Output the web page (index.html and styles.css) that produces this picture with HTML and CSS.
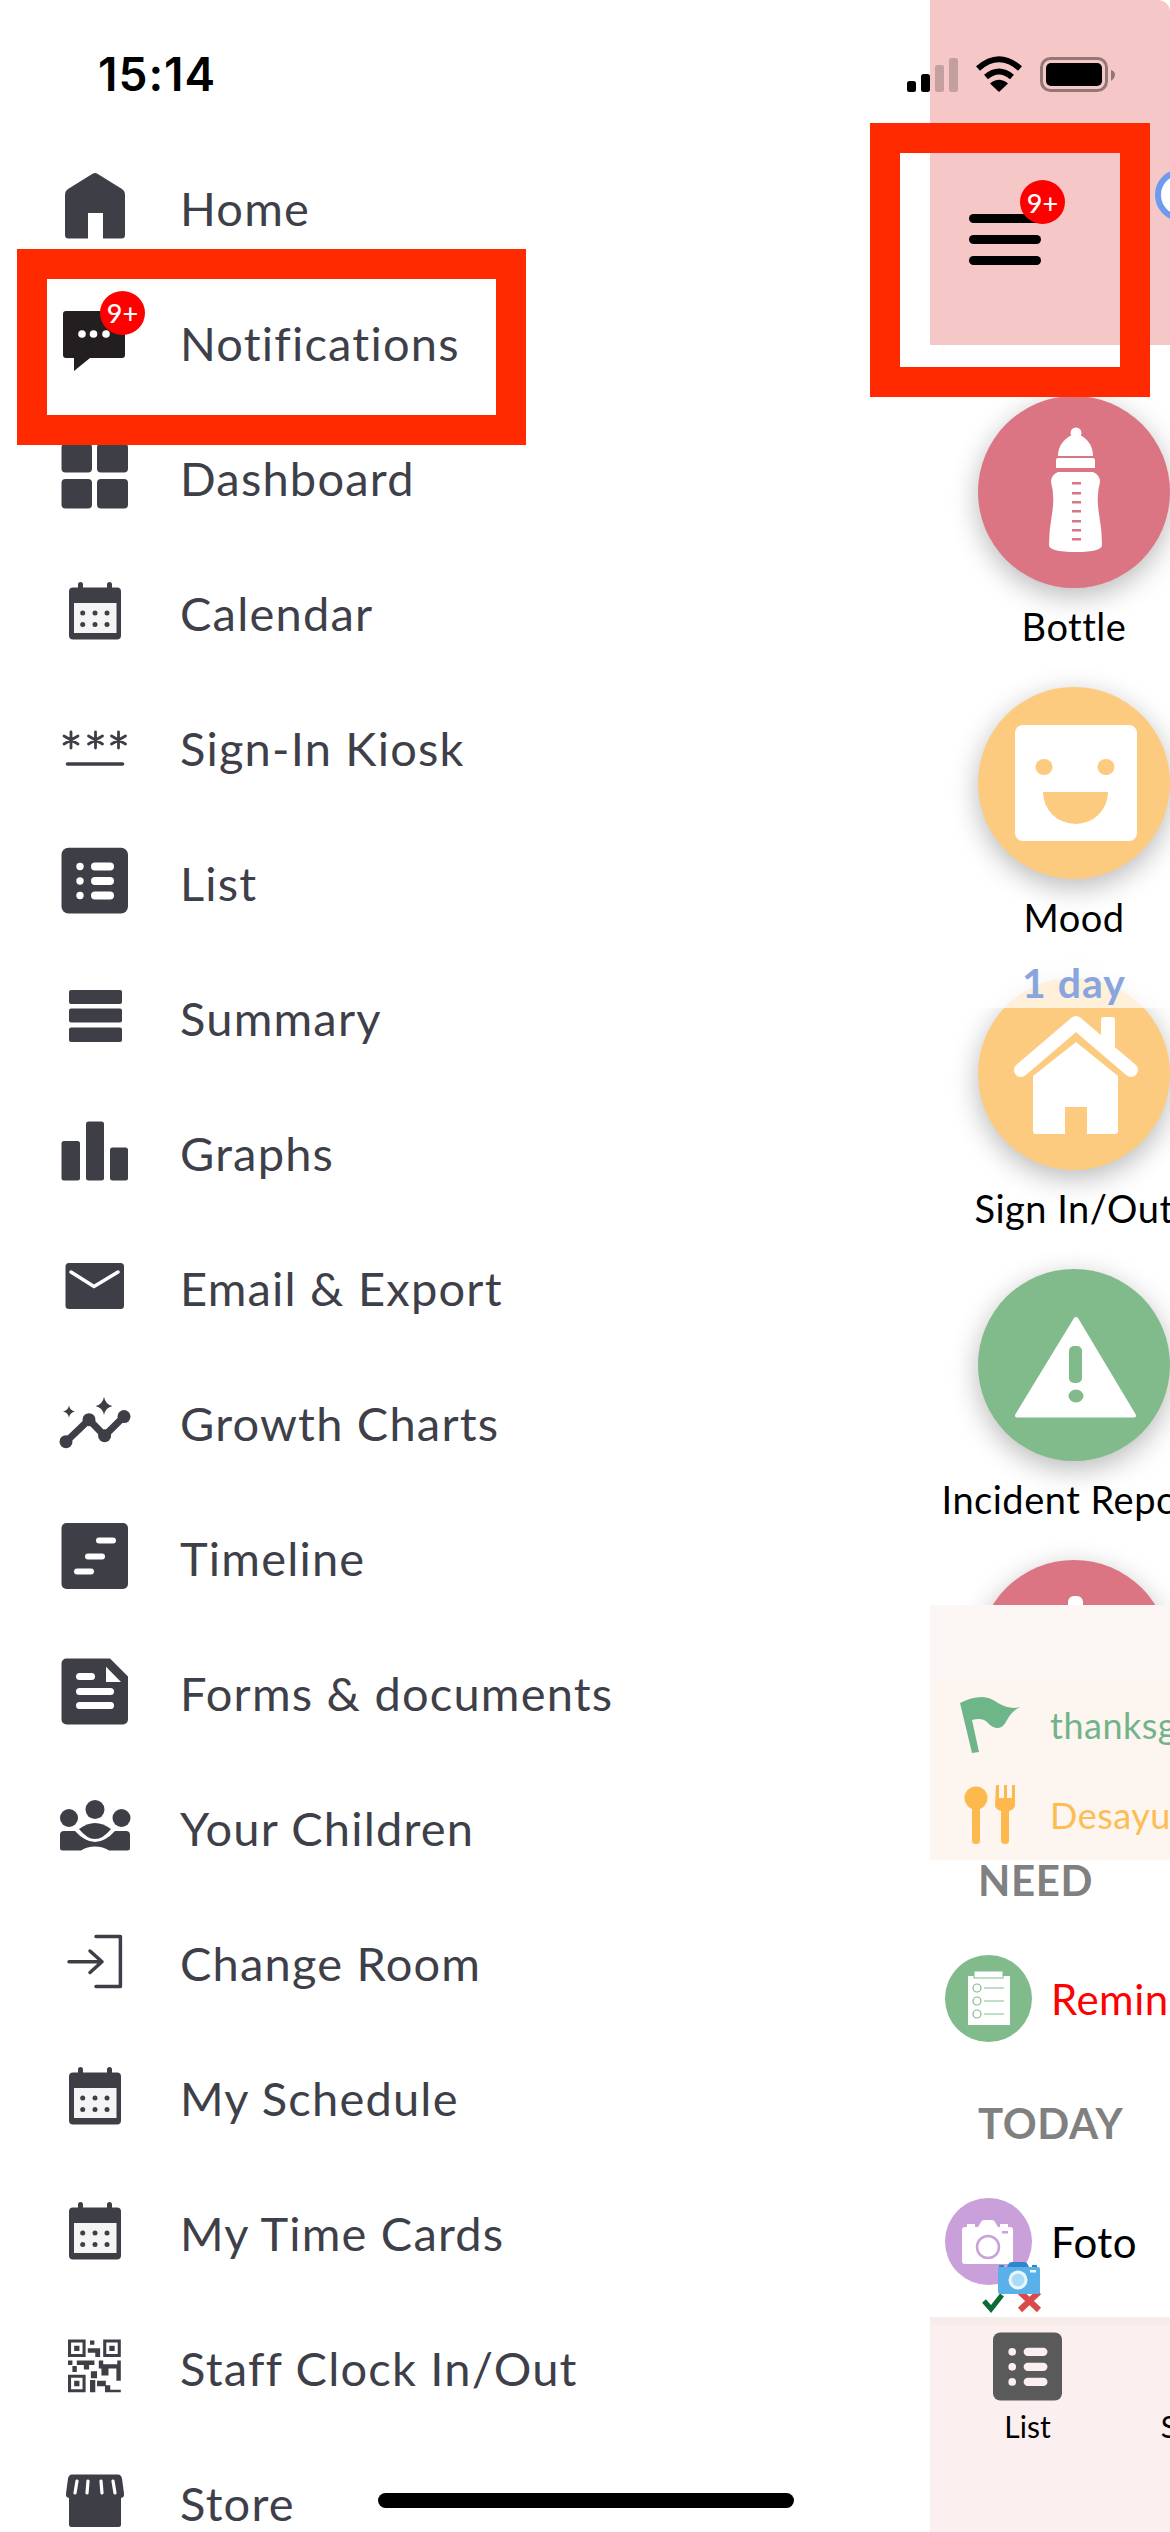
FILE: index.html

```html
<!DOCTYPE html>
<html lang="en">
<head>
  <meta charset="UTF-8" />
  <meta name="viewport" content="width=device-width, initial-scale=1.0" />
  <title>Menu</title>
  <link rel="stylesheet" href="styles.css">
</head>
<body>
  <svg class="defs" aria-hidden="true">
    <symbol id="calendar-icon" viewBox="0 0 80 80">
      <path d="M18 14.5h5v-3a2.5 2.5 0 0 1 5 0v3h24v-3a2.5 2.5 0 0 1 5 0v3h5a4 4 0 0 1 4 4v44a4 4 0 0 1-4 4H18a4 4 0 0 1-4-4v-44a4 4 0 0 1 4-4z" />
      <rect class="cut" x="19" y="30" width="42.500" height="30" />
      <g class="dots">
        <circle cx="27.700" cy="40" r="2.500" /><circle cx="40" cy="40" r="2.500" /><circle cx="52" cy="40" r="2.500" />
        <circle cx="27.700" cy="51.500" r="2.500" /><circle cx="40" cy="51.500" r="2.500" /><circle cx="52" cy="51.500" r="2.500" />
      </g>
    </symbol>
  </svg>

  <div class="screen">
    <nav class="drawer">
      <ul class="menu">
        <li class="menu-item">
          <svg class="menu-icon" viewBox="0 0 80 80"><path d="M38 5.500a4 4 0 0 1 4 0L67 21q3 2 3 6v40q0 3.500-3.500 3.500H48V45H33v25.500H13.500Q10 70.500 10 67V27q0-4 3-6z" /></svg>
          <span>Home</span>
        </li>
        <li class="menu-item">
          <div class="icon-wrap">
            <svg class="menu-icon chat" viewBox="0 0 80 80">
              <path d="M11 8h56a3 3 0 0 1 3 3v41a3 3 0 0 1-3 3H35L19 68V55h-8a3 3 0 0 1-3-3V11a3 3 0 0 1 3-3z" />
              <circle class="cut" cx="27" cy="31" r="3.800" /><circle class="cut" cx="38.500" cy="31" r="3.800" /><circle class="cut" cx="51" cy="31" r="3.800" />
            </svg>
            <b class="badge menu-badge">9+</b>
          </div>
          <span>Notifications</span>
        </li>
        <li class="menu-item">
          <svg class="menu-icon" viewBox="0 0 80 80">
            <rect x="6.500" y="5.500" width="30.500" height="29" rx="4" /><rect x="42" y="5.500" width="31" height="29" rx="4" />
            <rect x="6.500" y="41" width="30.500" height="29.500" rx="4" /><rect x="42" y="41" width="31" height="29.500" rx="4" />
          </svg>
          <span>Dashboard</span>
        </li>
        <li class="menu-item">
          <svg class="menu-icon"><use href="#calendar-icon" /></svg>
          <span>Calendar</span>
        </li>
        <li class="menu-item">
          <svg class="menu-icon" viewBox="0 0 80 80">
            <path class="line" d="M16 24v16M9 28l14 8M23 28L9 36M40.500 24v16M33.500 28l14 8M47.500 28l-14 8M63.500 24v16M56.500 28l14 8M70.500 28l-14 8" stroke-width="2.800" />
            <path class="line" d="M12.500 56h55" stroke-width="3.600" />
          </svg>
          <span>Sign-In Kiosk</span>
        </li>
        <li class="menu-item">
          <svg class="menu-icon" viewBox="0 0 80 80">
            <rect x="6.500" y="4.800" width="66.500" height="65.700" rx="7" />
            <g class="cut">
              <circle cx="25" cy="23.500" r="3.700" /><circle cx="25" cy="38" r="3.700" /><circle cx="25" cy="52.500" r="3.700" />
              <rect x="36" y="19.500" width="23" height="8" rx="4" /><rect x="36" y="34" width="23" height="8" rx="4" /><rect x="36" y="48.500" width="23" height="8" rx="4" />
            </g>
          </svg>
          <span>List</span>
        </li>
        <li class="menu-item">
          <svg class="menu-icon" viewBox="0 0 80 80">
            <rect x="14" y="12" width="53" height="14" rx="2" /><rect x="14" y="30.500" width="53" height="14" rx="2" /><rect x="14" y="49.500" width="53" height="14.500" rx="2" />
          </svg>
          <span>Summary</span>
        </li>
        <li class="menu-item">
          <svg class="menu-icon" viewBox="0 0 80 80">
            <rect x="6.500" y="28" width="18.500" height="39.500" rx="2.500" /><rect x="31" y="8.500" width="18" height="59" rx="2.500" /><rect x="55" y="34.500" width="18" height="33" rx="2.500" />
          </svg>
          <span>Graphs</span>
        </li>
        <li class="menu-item">
          <svg class="menu-icon" viewBox="0 0 80 80">
            <rect x="10.500" y="15" width="58.500" height="46" rx="3.500" />
            <path class="cut-line" d="M16 24l23 14.500L63 24" stroke-width="3.400" />
          </svg>
          <span>Email &amp; Export</span>
        </li>
        <li class="menu-item">
          <svg class="menu-icon" viewBox="0 0 80 80">
            <path class="line" d="M11 58.700L34 36.700 49.600 52.700 69 33.600" stroke-width="7" />
            <circle cx="11" cy="58.700" r="6.500" /><circle cx="34" cy="36.700" r="6.500" /><circle cx="49.600" cy="52.700" r="6.500" /><circle cx="69" cy="33.600" r="6.500" />
            <path d="M49 14q1.500 7.500 8.500 9-7 1.500-8.500 9-1.500-7.500-8.500-9 7-1.500 8.500-9zM14 22.500q1 5 6 6-5 1-6 6-1-5-6-6 5-1 6-6z" />
          </svg>
          <span>Growth Charts</span>
        </li>
        <li class="menu-item">
          <svg class="menu-icon" viewBox="0 0 80 80">
            <rect x="6.500" y="5" width="66.500" height="66" rx="5" />
            <g class="cut">
              <rect x="41" y="19.500" width="20" height="6" rx="3" /><rect x="30" y="35.500" width="20" height="6" rx="3" /><rect x="19" y="50.500" width="20" height="6" rx="3" />
            </g>
          </svg>
          <span>Timeline</span>
        </li>
        <li class="menu-item">
          <svg class="menu-icon" viewBox="0 0 80 80">
            <path d="M11.500 5.500H55l18 18v43a5 5 0 0 1-5 5H11.500a5 5 0 0 1-5-5v-56a5 5 0 0 1 5-5z" />
            <path class="cut" d="M51 13.800L66 29H51z" />
            <g class="cut">
              <rect x="21" y="20" width="19" height="7" rx="3.500" /><rect x="21" y="35" width="38" height="7" rx="3.500" /><rect x="21" y="49" width="38" height="7" rx="3.500" />
            </g>
          </svg>
          <span>Forms &amp; documents</span>
        </li>
        <li class="menu-item">
          <svg class="menu-icon" viewBox="0 0 80 80">
            <circle cx="40" cy="21.500" r="9.500" /><circle cx="14" cy="30" r="9" /><circle cx="66.500" cy="30" r="9" />
            <path d="M24 41q8-6 16-6t16 6q-8 10-16 10t-16-10z" />
            <path d="M5 47q0-4 4-4h11q10 11 20 11t20-11h11q4 0 4 4v13q0 2.500-2.500 2.500H54q-6-4-14-4t-14 4H7.500Q5 62.500 5 60z" />
          </svg>
          <span>Your Children</span>
        </li>
        <li class="menu-item">
          <svg class="menu-icon" viewBox="0 0 80 80">
            <path class="line" d="M41 13.500h24.400v50H41M14 38.800h33M35 28l12 10.800L35 49.500" stroke-width="3.500" />
          </svg>
          <span>Change Room</span>
        </li>
        <li class="menu-item">
          <svg class="menu-icon"><use href="#calendar-icon" /></svg>
          <span>My Schedule</span>
        </li>
        <li class="menu-item">
          <svg class="menu-icon"><use href="#calendar-icon" /></svg>
          <span>My Time Cards</span>
        </li>
        <li class="menu-item">
          <svg class="menu-icon" viewBox="0 0 80 80">
            <g transform="translate(13 11.500) scale(4.400)">
              <path fill-rule="evenodd" d="M0 0h4v4H0zM.7.7v2.600h2.600V.7zM8 0h4v4H8zM8.700.7v2.600h2.600V.7zM0 8h4v4H0zM.7 8.700v2.600h2.600V8.700z" />
              <path d="M1.400 1.400h1.200v1.200H1.400zM9.400 1.400h1.200v1.200H9.400zM1.400 9.400h1.200v1.200H1.400z" />
              <path d="M5 .2h1v1H5zM4.500 2h2.800v2H6.200V3H4.500zM0 4.800h1v1H0zM2 4.800h4v1H4.800v1H3.600v-1H2zM7 4.800h1v.8h3.200v-.8h.8v4.600h-1V6.600H9.200v1.600H7.600V6.600H7zM1 6h1v1.400H1zM5.200 7.200h1.400v1.600H5.200zM5 9.200h1.200v2.800H5zM6.600 9.400h2v1h1v1h2.400v.6H8.400v-1.400H6.600z" />
            </g>
          </svg>
          <span>Staff Clock In/Out</span>
        </li>
        <li class="menu-item">
          <svg class="menu-icon" viewBox="0 0 80 80">
            <path d="M17 11.500h46q3 0 4 4l2 15q.5 4-3 4.500v27q0 2-2.500 2h-47q-2.500 0-2.500-2V35q-3.500-.5-3-4.500l2-15q1-4 4-4z" />
            <path class="cut-line" d="M22 18l-2 12M33 18l-1 12M46 18l1 12M58 18l2 12" stroke-width="3.200" />
          </svg>
          <span>Store</span>
        </li>
      </ul>
    </nav>

    <main class="panel">
      <header class="panel-head">
        <div class="burger">
          <i></i><i></i><i></i>
          <b class="badge burger-badge">9+</b>
        </div>
        <div class="search-ring"></div>
      </header>

      <section class="actions">
        <div class="action">
          <div class="circle rose">
            <svg viewBox="0 0 192 192">
              <circle cx="98" cy="37" r="5.500" />
              <path d="M80 60q0-14 14-21h8q13 7 13 21zM80 62h35a2 2 0 0 1 2 2v8H78v-8a2 2 0 0 1 2-2z" />
              <path d="M80 76h35q7 3 7 10-4 14-1 32 3 16 3 31 0 7-26 7-27 0-27-7 0-15 3-31 3-18-1-32 0-7 7-10z" />
              <g class="rose-fill">
                <rect x="94" y="86" width="9" height="2.500" /><rect x="94" y="96" width="9" height="2.500" /><rect x="94" y="105" width="9" height="2.500" /><rect x="94" y="114" width="9" height="2.500" />
                <rect x="94" y="124" width="9" height="2.500" /><rect x="94" y="133" width="9" height="2.500" /><rect x="94" y="142" width="9" height="2.500" />
              </g>
            </svg>
          </div>
          <p>Bottle</p>
        </div>
        <div class="action">
          <div class="circle amber">
            <svg viewBox="0 0 192 192">
              <rect x="37" y="38" width="122" height="116" rx="8" />
              <g class="amber-fill">
                <ellipse cx="66" cy="80" rx="8.500" ry="8" /><ellipse cx="128" cy="80" rx="8.500" ry="8" />
                <path d="M65 105h65a32.500 32 0 0 1-65 0z" />
              </g>
            </svg>
          </div>
          <p>Mood</p>
        </div>
        <div class="action">
          <div class="circle amber">
            <svg viewBox="0 0 192 192">
              <path d="M123 42a3 3 0 0 1 3-3h8a3 3 0 0 1 3 3v34l-14-11z" />
              <path class="roof" d="M43 92l55-47 55 47" />
              <path d="M98 64l42 34v55q0 3-3 3h-28v-27H87v27H58q-3 0-3-3V98z" />
            </svg>
          </div>
          <p>Sign In/Out</p>
        </div>
        <div class="action">
          <div class="circle sage">
            <svg viewBox="0 0 192 192">
              <path d="M96 49a2.500 2.500 0 0 1 4 0l58 97q.5 2.500-2 2.500H39q-2.500 0-2-2.500z" />
              <g class="sage-fill">
                <rect x="91" y="77" width="13" height="37" rx="5" /><ellipse cx="98" cy="127" rx="7.500" ry="6.500" />
              </g>
            </svg>
          </div>
          <p>Incident Report</p>
        </div>
        <div class="action">
          <div class="circle rose">
            <svg viewBox="0 0 192 192"><rect x="90" y="36" width="15" height="40" rx="6" /></svg>
          </div>
        </div>
        <div class="day-chip">1 day</div>
      </section>

      <section class="events">
        <div class="event event-green">
          <svg viewBox="0 0 60 56"><path d="M0 6Q11 0 22 0q8 0 16 6 12 7 22 4-8 4-13 13-4 8-9 8-6 0-11-6-5-5-15-2l7 32-7 1z" /></svg>
          <span>thanksgiving</span>
        </div>
        <div class="event event-amber">
          <svg viewBox="0 0 60 60"><circle cx="16" cy="13" r="11.500" /><path d="M12 20h8v36q0 3-4 3t-4-3zM36 0h3v13h5V0h3v13h5V0h3v20q0 4-6 6v30q0 3-4 3t-4-3V26q-6-2-6-6z" /></svg>
          <span>Desayuno</span>
        </div>
      </section>

      <section class="today">
        <h2>NEED</h2>
        <div class="entry entry-first">
          <div class="entry-icon sage">
            <svg viewBox="0 0 87 87">
              <rect x="23" y="21" width="42" height="49" />
              <rect class="clip" x="29" y="16" width="29" height="7" />
              <g class="check-rows">
                <circle cx="32" cy="33" r="4" /><circle cx="32" cy="46" r="4" /><circle cx="32" cy="59" r="4" />
                <path d="M39 33h20M39 46h20M39 59h20" />
              </g>
            </svg>
          </div>
          <span class="alert">Reminder</span>
        </div>
        <h2 class="heading-today">TODAY</h2>
        <div class="entry entry-first">
          <div class="entry-icon lilac">
            <svg viewBox="0 0 87 87">
              <path d="M22 26h8v3h3l3-5q1-2 3-2h8q2 0 3 2l3 5h2v-3h8v3h2q3 0 3 3v31q0 3-3 3H20q-3 0-3-3V32q0-3 3-3h2z" />
              <circle class="lens" cx="43" cy="49" r="11" />
              <rect class="lilac-fill" x="57" y="33" width="6" height="2.500" />
            </svg>
            <svg class="photo-mark" viewBox="0 0 60 51">
              <path class="mark-no" d="M38 30l19 18M57 30L38 48" />
              <path class="mark-yes" d="M2 39l7 8L20 33" />
              <path fill="#2f86cf" d="M26 3q1-3 4-3h12q3 0 4 3l1 2H25zM17 3h5v3h-5zM50 3h5v3h-5z" />
              <rect fill="#5ab0e8" x="16" y="5" width="42" height="27" rx="2" />
              <circle fill="#eaf7fe" cx="36" cy="18" r="9.500" /><circle fill="#a9dcf8" cx="36" cy="18" r="6.500" />
              <rect fill="#eaf7fe" x="48" y="8" width="6" height="2.500" />
            </svg>
          </div>
          <span>Foto</span>
        </div>
      </section>

      <footer class="tabbar">
        <div class="tab">
          <svg class="tab-icon" viewBox="6.500 4.800 66.500 65.700">
            <rect x="6.500" y="4.800" width="66.500" height="65.700" rx="7" />
            <g class="cut">
              <circle cx="25" cy="23.500" r="3.700" /><circle cx="25" cy="38" r="3.700" /><circle cx="25" cy="52.500" r="3.700" />
              <rect x="36" y="19.500" width="23" height="8" rx="4" /><rect x="36" y="34" width="23" height="8" rx="4" /><rect x="36" y="48.500" width="23" height="8" rx="4" />
            </g>
          </svg>
          <span>List</span>
        </div>
        <div class="tab">
          <div class="tab-icon-space"></div>
          <span>Summary</span>
        </div>
      </footer>
    </main>

    <!-- status bar and annotation boxes sit over everything -->
    <div class="statusbar">
      <span class="clock">15:14</span>
      <div class="status-icons">
        <svg class="signal" viewBox="0 0 51 34">
          <rect y="23" width="9" height="11" rx="2.500" /><rect x="14" y="16" width="9" height="18" rx="2.500" />
          <rect class="dim" x="28" y="7" width="9" height="27" rx="2.500" /><rect class="dim" x="42" width="9" height="34" rx="2.500" />
        </svg>
        <svg class="wifi" viewBox="0 0 48 36">
          <path d="M3 12.500Q24-6 45 12.500M11 21Q24 10 37 21" />
          <path class="wedge" d="M24 36l-9-8.500Q24 20 33 27.500z" />
        </svg>
        <svg class="battery" viewBox="0 0 75 35">
          <rect class="battery-frame" x="1.500" y="1.500" width="65" height="32" rx="9" />
          <rect x="6" y="6" width="56" height="23" rx="5" />
          <path class="battery-cap" d="M71 13q4 1 4 4.500T71 24z" />
        </svg>
      </div>
    </div>
    <div class="callout callout-menu"></div>
    <div class="callout callout-burger"></div>
    <div class="home-indicator"></div>
  </div>
</body>
</html>
```

FILE: styles.css

```css
* {
  box-sizing: border-box;
}
body {
  margin: 0;
  background: #fff;
  font-family: Lato, "Open Sans", sans-serif;
}
.defs {
  position: absolute;
  width: 0;
  height: 0;
}
.screen {
  position: relative;
  display: flex;
  width: 1170px;
  height: 2532px;
  overflow: hidden;
  background: #fff;
}

/* drawer */
.drawer {
  flex: none;
  width: 930px;
  padding: 140px 0 0 55px;
}
.menu {
  margin: 0;
  padding: 0;
  list-style: none;
}
.menu-item {
  display: flex;
  align-items: center;
  gap: 45px;
  height: 135px;
  color: #3e3f48;
  font-size: 47px;
  letter-spacing: 1.2px;
  white-space: nowrap;
}
.menu-icon {
  flex: none;
  display: block;
  width: 80px;
  height: 80px;
  fill: #3e3e47;
}
.chat {
  fill: #231f20;
}
.cut,
.dots {
  fill: #fff;
}
#calendar-icon .dots {
  fill: #3e3e47;
}
#calendar-icon .cut {
  fill: #f4f4f5;
}
.line,
.cut-line {
  fill: none;
  stroke: #3e3e47;
  stroke-linecap: round;
  stroke-linejoin: round;
}
.cut-line {
  stroke: #fff;
}
.icon-wrap {
  position: relative;
  flex: none;
  width: 80px;
  height: 80px;
}
.badge {
  position: absolute;
  display: flex;
  align-items: center;
  justify-content: center;
  width: 45px;
  height: 44px;
  border-radius: 50%;
  background: #f00;
  color: #fff;
  font-size: 27px;
  font-weight: 500;
  letter-spacing: 0;
}
.menu-badge {
  left: 45px;
  top: -12px;
}

/* page pushed to the right */
.panel {
  flex: none;
  display: flex;
  flex-direction: column;
  width: 240px;
  height: 2532px;
  overflow: hidden;
}
.panel-head {
  position: relative;
  flex: none;
  height: 345px;
  padding: 214px 0 0 39px;
  background: #f6c7c7;
  border-top-right-radius: 12px;
}
.burger {
  position: relative;
  width: 72px;
}
.burger i {
  display: block;
  height: 9px;
  margin-bottom: 12px;
  border-radius: 5px;
  background: #000;
}
.burger-badge {
  left: 51px;
  top: -34px;
}
.search-ring {
  position: absolute;
  left: 225px;
  top: 169px;
  width: 52px;
  height: 52px;
  border: 6px solid #6f9bef;
  border-radius: 50%;
  background: #fff;
}
.actions {
  position: relative;
  flex: none;
  height: 1260px;
  padding-top: 51px;
  overflow: hidden;
}
.action {
  width: 288px;
  height: 291px;
  text-align: center;
}
.action p {
  margin: 16px 0 0;
  color: #000;
  font-size: 38px;
  line-height: 44px;
  letter-spacing: .5px;
  white-space: nowrap;
}
.circle {
  width: 192px;
  height: 192px;
  margin: 0 auto;
  border-radius: 50%;
  box-shadow: 0 8px 28px rgba(0, 0, 0, .28);
}
.circle svg {
  display: block;
  fill: #fff;
}
.rose {
  background: #db7584;
}
.amber {
  background: #fccb80;
}
.sage {
  background: #82bb8b;
}
.lilac {
  background: #c9a0d9;
}
.rose-fill {
  fill: #db7584;
}
.amber-fill {
  fill: #fccb80;
}
.sage-fill {
  fill: #82bb8b;
}
.lilac-fill {
  fill: #c9a0d9;
}
.roof {
  fill: none;
  stroke: #fff;
  stroke-width: 14;
  stroke-linecap: round;
  stroke-linejoin: round;
}
.day-chip {
  position: absolute;
  left: 0;
  top: 618px;
  width: 288px;
  height: 45px;
  background: rgba(255, 255, 255, .7);
  color: #88a5e0;
  font-size: 41px;
  font-weight: 700;
  line-height: 40px;
  letter-spacing: 1px;
  text-align: center;
}

/* cream strip */
.events {
  flex: none;
  height: 255px;
  padding-top: 75px;
  background: linear-gradient(#fcf6f4 75px, #fdf5ef 75px);
}
.event {
  display: flex;
  align-items: center;
  gap: 30px;
  height: 90px;
  padding-left: 30px;
  font-size: 36px;
  letter-spacing: .5px;
  white-space: nowrap;
}
.event svg {
  flex: none;
  width: 60px;
  height: 60px;
}
.event-green {
  color: #72b48a;
  fill: #6fb58a;
}
.event-amber {
  color: #fdbd54;
  fill: #fdb94d;
}

/* need / today */
.today {
  flex: none;
  height: 457px;
}
.today h2 {
  margin: 0;
  padding-left: 48px;
  color: #808080;
  font-size: 42px;
  font-weight: 700;
  line-height: 40px;
  letter-spacing: .6px;
}
.today .heading-today {
  margin-top: 61px;
}
.entry {
  display: flex;
  align-items: center;
  gap: 19px;
  padding-left: 15px;
  font-size: 42px;
  letter-spacing: .5px;
  white-space: nowrap;
}
.entry-first {
  margin-top: 55px;
}
.alert {
  color: #f00;
}
.entry-icon {
  position: relative;
  flex: none;
  width: 87px;
  height: 87px;
  border-radius: 50%;
  fill: #fff;
}
.entry-icon svg {
  display: block;
}
.clip {
  stroke: #82bb8b;
  stroke-width: 1;
}
.check-rows {
  fill: none;
  stroke: #82bb8b;
  stroke-width: 1.200;
}
.lens {
  stroke: #c9a0d9;
  stroke-width: 2.500;
}
.entry-icon .photo-mark {
  position: absolute;
  left: 37px;
  top: 64px;
  width: 60px;
  height: 51px;
}
.mark-yes,
.mark-no {
  fill: none;
}
.mark-yes {
  stroke: #0b6b35;
  stroke-width: 5;
}
.mark-no {
  stroke: #d94a4a;
  stroke-width: 6;
}

/* bottom tabs */
.tabbar {
  flex: none;
  display: flex;
  height: 215px;
  padding-top: 7px;
  border-top: 8px solid #f6ecea;
  background: #fbf0ef;
}
.tab {
  flex: none;
  display: flex;
  flex-direction: column;
  align-items: center;
  width: 195px;
  color: #000;
  font-size: 30px;
  line-height: 36px;
}
.tab-icon {
  display: block;
  width: 69px;
  height: 69px;
  margin-bottom: 7px;
  fill: #5a5a5a;
}
.tab-icon .cut {
  fill: #fbf0ef;
}
.tab-icon-space {
  height: 76px;
}

/* status bar */
.statusbar {
  position: absolute;
  left: 0;
  top: 0;
  display: flex;
  justify-content: space-between;
  align-items: center;
  width: 100%;
  height: 148px;
  padding: 0 55px 0 98px;
}
.clock {
  color: #000;
  font-family: Inter, sans-serif;
  font-size: 46px;
  font-weight: 600;
  letter-spacing: 1px;
}
.status-icons {
  display: flex;
  align-items: center;
  gap: 17px;
}
.signal {
  width: 51px;
  height: 34px;
  margin-top: 1px;
}
.signal .dim {
  opacity: .2;
}
.wifi {
  width: 48px;
  height: 36px;
  fill: none;
  stroke: #000;
  stroke-width: 6;
}
.wifi .wedge {
  fill: #000;
  stroke: none;
}
.battery {
  width: 75px;
  height: 35px;
}
.battery-frame {
  fill: none;
  stroke: rgba(0, 0, 0, .4);
  stroke-width: 3;
}
.battery-cap {
  opacity: .4;
}

/* red annotation boxes */
.callout {
  position: absolute;
  border: 30px solid #ff2a00;
}
.callout-menu {
  left: 17px;
  top: 249px;
  width: 509px;
  height: 196px;
}
.callout-burger {
  left: 870px;
  top: 123px;
  width: 280px;
  height: 274px;
}
.home-indicator {
  position: absolute;
  left: 378px;
  top: 2493px;
  width: 416px;
  height: 15px;
  border-radius: 8px;
  background: #000;
}
```
